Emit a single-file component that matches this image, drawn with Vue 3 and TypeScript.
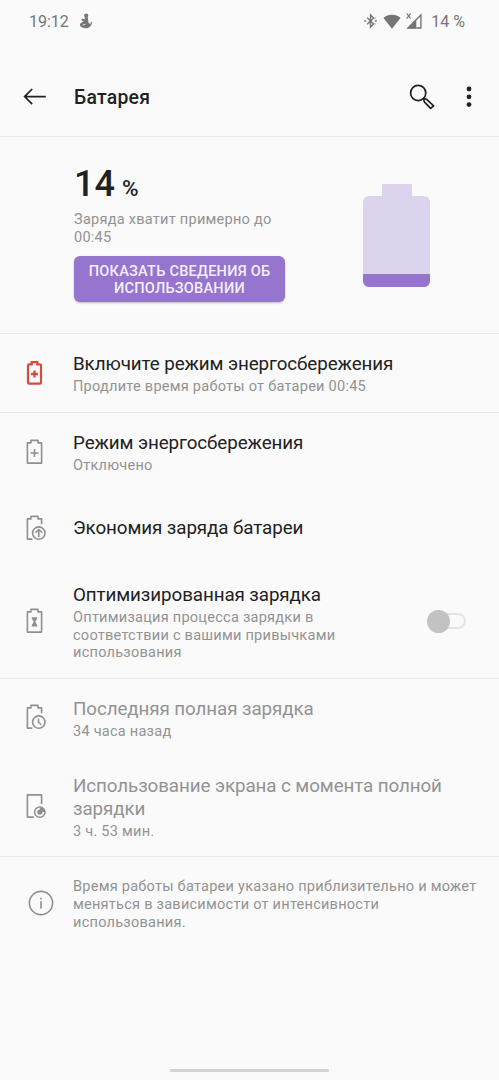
<script setup lang="ts">
type IconName = 'saver' | 'economy' | 'optimized' | 'lastCharge' | 'screenUse'

interface Row {
  icon: IconName
  title: string
  summary?: string
  alert?: boolean
  muted?: boolean
  toggle?: boolean
}

const groups: Row[][] = [
  [
    {
      icon: 'saver',
      title: 'Включите режим энергосбережения',
      summary: 'Продлите время работы от батареи 00:45',
      alert: true,
    },
  ],
  [
    { icon: 'saver', title: 'Режим энергосбережения', summary: 'Отключено' },
    { icon: 'economy', title: 'Экономия заряда батареи' },
    {
      icon: 'optimized',
      title: 'Оптимизированная зарядка',
      summary: 'Оптимизация процесса зарядки в соответствии с вашими привычками использования',
      toggle: true,
    },
  ],
  [
    { icon: 'lastCharge', title: 'Последняя полная зарядка', summary: '34 часа назад', muted: true },
    {
      icon: 'screenUse',
      title: 'Использование экрана с момента полной зарядки',
      summary: '3 ч. 53 мин.',
      muted: true,
    },
  ],
]
</script>

<template>
  <div class="screen">
    <header class="status">
      <span class="time">19:12</span>
      <svg class="notif" width="14" height="16" viewBox="0 0 14 16" fill="#757575">
        <circle cx="7.2" cy="2.7" r="2.1" />
        <path d="M5.8 4.2 9 4.5 9.4 9.5 11 11.2 12.3 8.6 13 9.2C12.8 12.5 10.5 15.2 6.5 15.2 3.4 15.2 1 13.8.9 12.1.8 10.3 2.8 9.3 4.4 8.8L2.2 6.8 3 5.4 5.4 6.4Z" />
        <path d="M3.5 12.1 6.3 11.3" stroke="#fafafa" stroke-width=".8" />
      </svg>
      <div class="indicators">
        <svg width="13" height="16" viewBox="0 0 13 16" fill="none" stroke="#757575" stroke-width="1.4">
          <path d="M3.2 4.7 9.6 10.9 6.5 14V2L9.6 5.1 3.2 11.3" />
          <path d="M.2 8H2.2M10.8 8H12.8" stroke-width="1.7" />
          <path d="M10.6 5.6 11.8 4.7M10.6 10.4 11.8 11.3" stroke-width=".9" />
        </svg>
        <svg class="wifi" width="18" height="15" viewBox="0 0 18 15" fill="#757575">
          <path d="M.4 3.9C5.3-.2 12.7-.2 17.6 3.9L9 14.7Z" />
        </svg>
        <svg class="signal" width="17" height="18" viewBox="0 0 17 18">
          <path d="M1.2 16.6 9.6 8V16.6Z" fill="#757575" />
          <path d="M2 16 14.9 3V16ZM9.6 8.6V16" fill="none" stroke="#757575" stroke-width="1.4" />
          <path d="M.7 1.4 4.6 6.6M4.6 1.4.7 6.6" fill="none" stroke="#757575" stroke-width="1.1" />
        </svg>
        <span class="percent">14 %</span>
      </div>
    </header>

    <nav class="bar">
      <svg class="back" width="24" height="18" viewBox="0 0 24 18" fill="none" stroke="#212121" stroke-width="1.7">
        <path d="M9.2 1 1.6 8.6 9.2 16.2M1.8 8.6H22.8" />
      </svg>
      <h1>Батарея</h1>
      <svg class="search" width="28" height="28" viewBox="0 0 28 28" fill="none" stroke="#212121" stroke-width="1.7">
        <circle cx="10.2" cy="10" r="7.6" />
        <path d="M15.6 15.4 18.4 16.2 25.6 22.8 22.6 25.4 16.3 18.8Z" stroke-linejoin="round" />
      </svg>
      <svg class="more" width="6" height="22" viewBox="0 0 6 22" fill="#212121">
        <circle cx="3" cy="3" r="2.4" />
        <circle cx="3" cy="10.8" r="2.4" />
        <circle cx="3" cy="18.6" r="2.4" />
      </svg>
    </nav>

    <section class="summary-card">
      <div class="info">
        <div class="level">14 <small>%</small></div>
        <p class="estimate">Заряда хватит примерно до 00:45</p>
        <button class="details">ПОКАЗАТЬ СВЕДЕНИЯ ОБ ИСПОЛЬЗОВАНИИ</button>
      </div>
      <div class="battery">
        <div class="cap"></div>
        <div class="cell"><div class="charge"></div></div>
      </div>
    </section>

    <section v-for="(group, g) in groups" :key="g" class="group">
      <div v-for="row in group" :key="row.title" class="row" :class="{ alert: row.alert, muted: row.muted, single: !row.summary }">
        <svg class="icon" width="24" height="28" viewBox="0 0 24 28" fill="none" stroke="currentColor">
          <template v-if="row.alert">
            <path d="M5.1 5.4H7.7V3.2H13.3V5.4H15.9Q17 5.4 17 6.5V23.5Q17 24.6 15.9 24.6H5.1Q4 24.6 4 23.5V6.5Q4 5.4 5.1 5.4Z" stroke-width="2.2" />
            <path d="M7 15H14M10.5 11.5V18.5" stroke-width="2.3" />
          </template>
          <template v-else-if="row.icon === 'saver'">
            <path class="outline" d="M3.4 25.1V4.9H6.9V2.4H14V4.9H17.6V25.1Z" stroke-linejoin="round" />
            <path class="outline" d="M6.6 15H14.4M10.5 11.1V18.9" />
          </template>
          <template v-else-if="row.icon === 'economy'">
            <path class="outline" d="M17.6 10.2V4.9H14V2.4H6.9V4.9H3.4V25.1H8.4" stroke-linejoin="round" />
            <circle class="outline" cx="14.8" cy="19.1" r="6.2" />
            <path d="M14.8 23V15.8M11.4 18.7 14.8 15.5 18.2 18.7" stroke-width="1.5" />
          </template>
          <template v-else-if="row.icon === 'optimized'">
            <path class="outline" d="M3.4 25.1V4.9H6.9V2.4H14V4.9H17.6V25.1Z" stroke-linejoin="round" />
            <path d="M7.8 10.2H13.2V11.4L11.3 14.8 13.2 18.2V19.4H7.8V18.2L9.7 14.8 7.8 11.4Z" fill="currentColor" stroke="none" />
          </template>
          <template v-else-if="row.icon === 'lastCharge'">
            <path class="outline" d="M17.6 10.2V4.9H14V2.4H6.9V4.9H3.4V25.1H8.4" stroke-linejoin="round" />
            <circle class="outline" cx="14.8" cy="19.1" r="6.2" />
            <path d="M14.5 15.6V19.2L17.2 21.7" stroke-width="1.5" />
          </template>
          <template v-else>
            <path class="outline" d="M17.6 12V2.9H3.4V25.1H9.8" stroke-linejoin="round" />
            <circle cx="15.8" cy="20.1" r="5.2" stroke-width="1.5" />
            <path d="M15.8 14.9A5.2 5.2 0 0 1 21 20.1H18.4A2.6 2.6 0 1 1 15.8 17.5Z" fill="currentColor" stroke="none" />
          </template>
        </svg>
        <div class="text">
          <div class="title">{{ row.title }}</div>
          <div v-if="row.summary" class="sub">{{ row.summary }}</div>
        </div>
        <div v-if="row.toggle" class="toggle" role="switch" aria-checked="false"><i class="thumb"></i></div>
      </div>
    </section>

    <footer class="note">
      <svg width="26" height="26" viewBox="0 0 26 26" fill="none" stroke="#8f8f8f" stroke-width="1.6">
        <circle cx="13" cy="13" r="11.6" />
        <path d="M13 11.2V18.6M13 7.8V9.5" stroke-width="1.6" />
      </svg>
      <p class="sub">Время работы батареи указано приблизительно и может меняться в зависимости от интенсивности использования.</p>
    </footer>

    <div class="home"></div>
  </div>
</template>

<style>
body {
  margin: 0;
  background: #fafafa;
}
</style>

<style scoped>
.screen {
  box-sizing: border-box;
  width: 499px;
  height: 1080px;
  display: flex;
  flex-direction: column;
  overflow: hidden;
  background: #fafafa;
  color: #212121;
  font-family: Roboto, sans-serif;
}
svg {
  display: block;
  flex: none;
}
h1,
p {
  margin: 0;
}
.status {
  flex: none;
  display: flex;
  align-items: center;
  height: 42px;
  padding: 0 34px 0 29px;
  color: #757575;
  font-size: 16px;
}
.notif {
  margin-left: 10px;
}
.indicators {
  display: flex;
  align-items: center;
  margin-left: auto;
}
.wifi {
  margin-left: 6px;
}
.signal {
  margin: 0 8px 0 5px;
}
.bar {
  flex: none;
  box-sizing: border-box;
  display: flex;
  align-items: center;
  height: 95px;
  padding: 26px 27px 11px 23px;
  border-bottom: 1px solid #e9e9e9;
}
.bar h1 {
  margin-left: 27px;
  padding-top: 2px;
  font-size: 19.4px;
  font-weight: 500;
  line-height: 24px;
  letter-spacing: 0.25px;
}
.search {
  margin-left: auto;
}
.more {
  margin-left: 30px;
}
.summary-card {
  flex: none;
  box-sizing: border-box;
  display: flex;
  height: 197px;
  padding: 24px 69px 0 74px;
  border-bottom: 1px solid #e9e9e9;
}
.info {
  width: 211px;
}
.level {
  height: 46px;
  font-size: 36px;
  font-weight: 500;
  line-height: 46px;
}
.level small {
  font-size: 22.5px;
  margin-left: -2px;
}
.estimate {
  margin-top: 4px;
  color: #939393;
  font-size: 14.55px;
  line-height: 17.5px;
  letter-spacing: 0.25px;
}
.details {
  display: block;
  box-sizing: border-box;
  width: 211px;
  height: 46px;
  margin-top: 10px;
  padding: 2px 8px 0;
  border: 0;
  border-radius: 6px;
  background: #9575cd;
  box-shadow: 0 1px 2px rgba(0, 0, 0, 0.25);
  color: #f6eefe;
  font: 500 14.55px/17.5px Roboto, sans-serif;
  letter-spacing: 0.23px;
}
.battery {
  width: 67px;
  margin: 23px 0 0 auto;
}
.cap {
  width: 30px;
  height: 12px;
  margin: 0 auto;
  background: #dcd3ed;
}
.cell {
  display: flex;
  align-items: flex-end;
  height: 91px;
  border-radius: 6px;
  overflow: hidden;
  background: #dcd3ed;
}
.charge {
  width: 100%;
  height: 13px;
  background: #9575cd;
}
.group {
  flex: none;
  border-bottom: 1px solid #e9e9e9;
}
.row {
  display: flex;
  align-items: center;
  padding: 19.4px 33px 16.1px 24px;
}
.row.muted {
  padding-top: 19.1px;
  padding-bottom: 15.8px;
}
.row.single {
  padding-top: 23.5px;
  padding-bottom: 21.9px;
}
.icon {
  margin: -1.8px 0 1.8px;
  color: #8f8f8f;
}
.single .icon {
  margin: -0.5px 0 0.5px;
}
.outline {
  stroke-width: 1.6;
}
.alert .icon {
  color: #d84a41;
}
.text {
  width: 385px;
  flex: none;
  margin-left: 25px;
}
.row:has(.toggle) .text {
  width: 290px;
}
.title {
  font-size: 18.8px;
  line-height: 22.5px;
  letter-spacing: -0.09px;
}
.muted .title {
  color: #939393;
}
.sub {
  color: #939393;
  font-size: 14.55px;
  line-height: 17.6px;
  letter-spacing: 0.24px;
}
.title + .sub {
  margin-top: 2.5px;
}
.toggle {
  box-sizing: border-box;
  display: flex;
  align-items: center;
  width: 36px;
  height: 16px;
  margin: -1.6px 0 1.6px auto;
  border: 2px solid #e4e4e4;
  border-radius: 8px;
}
.thumb {
  flex: none;
  width: 23px;
  height: 23px;
  margin-left: -5px;
  border-radius: 50%;
  background: #c2c2c2;
}
.note {
  display: flex;
  align-items: center;
  padding: 21.2px 14px 0 28px;
}
.note svg {
  margin: -1.6px 0 1.6px;
}
.note .sub {
  margin-left: 19px;
}
.home {
  width: 159px;
  height: 3px;
  margin: auto auto 8px;
  border-radius: 1px;
  background: #d2d2d2;
}
</style>
